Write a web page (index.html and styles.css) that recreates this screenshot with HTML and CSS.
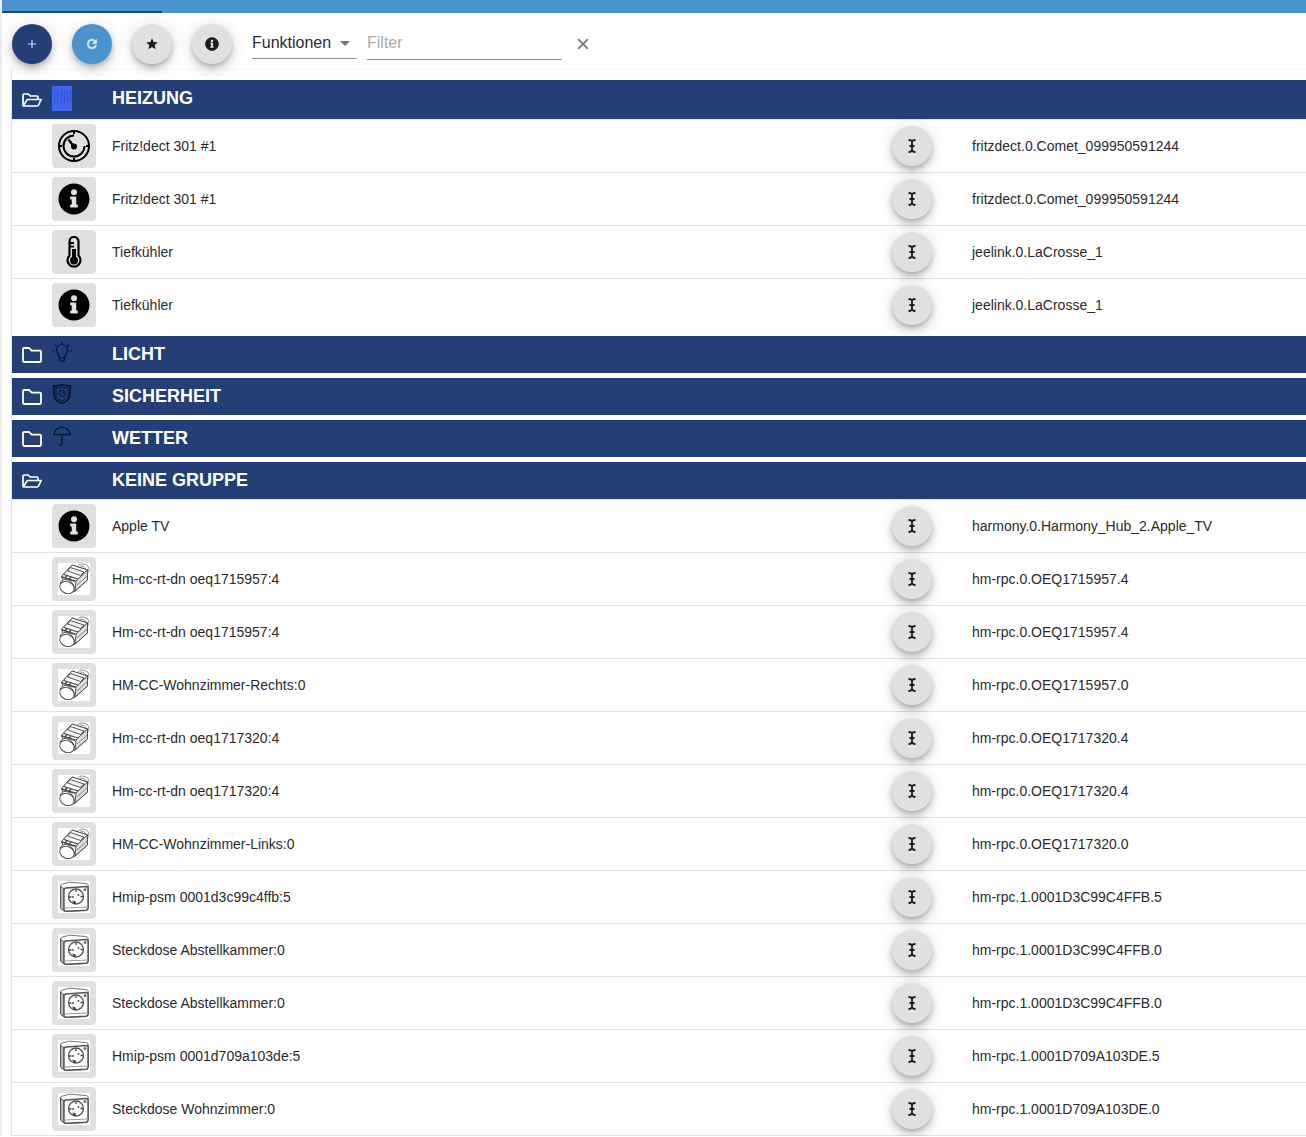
FILE: index.html
```html
<!DOCTYPE html>
<html lang="de">
<head>
    <meta charset="UTF-8">
    <meta name="viewport" content="width=device-width, initial-scale=1.0">
    <title>Geräte</title>
    <link rel="stylesheet" href="styles.css">
</head>
<body>

<svg class="sprite" aria-hidden="true">
    <symbol id="plus" viewBox="0 0 24 24"><path fill="currentColor" d="M19 13h-6v6h-2v-6H5v-2h6V5h2v6h6z"/></symbol>
    <symbol id="refresh" viewBox="0 0 24 24"><path fill="currentColor" stroke="currentColor" stroke-width=".8" d="M17.65 6.35A7.96 7.96 0 0 0 12 4a8 8 0 1 0 7.73 10h-2.08A6 6 0 1 1 12 6c1.66 0 3.14.69 4.22 1.78L13 11h7V4z"/></symbol>
    <symbol id="star" viewBox="0 0 24 24"><path fill="currentColor" d="M12 17.27 18.18 21l-1.64-7.03L22 9.24l-7.19-.61L12 2 9.19 8.63 2 9.24l5.46 4.73L5.82 21z"/></symbol>
    <symbol id="info" viewBox="0 0 512 512"><path fill="currentColor" d="M256 8C119 8 8 119 8 256s111 248 248 248 248-111 248-248S393 8 256 8zm0 92a48 48 0 1 1 0 96 48 48 0 0 1 0-96zm62 280c0 7-5 12-12 12H206c-7 0-12-5-12-12v-26c0-7 5-12 12-12h14v-78h-14c-7 0-12-5-12-12v-26c0-7 5-12 12-12h74c7 0 12 5 12 12v116h14c7 0 12 5 12 12z"/></symbol>
    <symbol id="close" viewBox="0 0 24 24"><path fill="currentColor" stroke="currentColor" stroke-width=".6" d="M19 6.41 17.59 5 12 10.59 6.41 5 5 6.41 10.59 12 5 17.59 6.41 19 12 13.41 17.59 19 19 17.59 13.41 12z"/></symbol>
    <symbol id="arrow" viewBox="0 0 10 5"><path fill="currentColor" d="M0 0h10L5 5z"/></symbol>
    <symbol id="cursor" viewBox="0 0 10 16"><path fill="none" stroke="currentColor" stroke-width="1.8" d="M1.5 2Q5 2 5 4.500v7Q5 14 1.500 14M8.500 2Q5 2 5 4.500M5 11.500Q5 14 8.500 14M2.500 8h5"/></symbol>
    <symbol id="folder" viewBox="0 0 20 16"><path fill="none" stroke="currentColor" stroke-width="1.8" stroke-linejoin="round" d="M1 2.200Q1 1 2.200 1h5l2.400 2.600h8.200Q19 3.600 19 4.800v9Q19 15 17.800 15H2.200Q1 15 1 13.800z"/></symbol>
    <symbol id="folder-open" viewBox="0 0 20 16"><path fill="none" stroke="currentColor" stroke-width="1.7" stroke-linejoin="round" d="M1.400 14 1 13V3.200Q1 2 2.200 2h4l2 2h6.600Q16 4 16 5.200V7.500M1.400 14 4.600 8.300Q5 7.500 6 7.500h13.200L16.500 13q-.5 1-1.500 1z"/></symbol>
    <symbol id="heating" viewBox="0 0 20 25"><path fill="#4263eb" d="M0 0h20v25H0z"/><path fill="none" stroke="#3450cc" d="M2.500 4v13M5.500 4v13M9.500 4v13M12.500 4v13M15.500 4v13M18.500 4v13"/></symbol>
    <symbol id="bulb" viewBox="0 0 20 20"><path fill="none" stroke="currentColor" stroke-width="1.200" d="M7.500 16c0-3-3-4.500-3-8a5.500 5.500 0 0 1 11 0c0 3.500-3 5-3 8zM7.500 18q2.500 3 5 0v-2M7.500 18v-2M10 0v2M3 2.500 4.500 4M17 2.500 15.500 4M0 9h2.500M17.500 9H20"/></symbol>
    <symbol id="shield" viewBox="0 0 20 20"><path fill="none" stroke="currentColor" stroke-width="1.600" d="M10 .8q4 1.200 8.200 1V9q0 7.500-8.200 10.200Q1.800 16.500 1.800 9V1.800Q6 2 10 .8z"/><path fill="none" stroke="currentColor" d="M10 3.200q3 1 6 .9V9q0 5.500-6 7.900Q4 14.500 4 9V4.100q3 .1 6-.9z"/><circle cx="10" cy="9.500" r="3.200" fill="none" stroke="currentColor"/><path fill="none" stroke="currentColor" d="m8.500 9.500 1.200 1.200 2.300-3"/></symbol>
    <symbol id="umbrella" viewBox="0 0 20 20"><path fill="none" stroke="currentColor" stroke-width="1.200" d="M10 0v1.500M2 9C2 4.500 5.500 1.500 10 1.500S18 4.500 18 9q-2-1.500-4 0-2-1.500-4 0-2-1.500-4 0-2-1.500-4 0M10 9v8.500q0 1.800-1.300 1.800T7.500 17.500"/></symbol>
    <symbol id="gauge" viewBox="0 0 32 32"><g fill="none" stroke="#000" stroke-width="2"><circle cx="16" cy="16" r="15"/><path d="M16 5.500A10.500 10.500 0 1 0 26.500 16M16 1v3M16 28v3M1 16h3M28 16h3"/><path stroke-width="2.500" d="m10.500 9.500 5 6.500"/></g><circle cx="16" cy="16.500" r="3"/></symbol>
    <symbol id="thermometer" viewBox="0 0 32 32"><path fill="none" stroke="#000" stroke-width="2.200" d="M11.500 19.500V5.500a4.500 4.500 0 0 1 9 0v14a6.500 6.500 0 1 1-9 0zM12 7h4M12 10.500h4"/><circle cx="16" cy="24.500" r="4"/><path d="M14 13h4v10h-4z"/></symbol>
    <symbol id="thermostat" viewBox="0 0 32 32">
        <path fill="#fff" d="M0 0h32v32H0z"/>
        <g fill="#fff" stroke="#444" stroke-width=".9" stroke-linejoin="round">
            <path stroke="#888" d="M20 3q2-3 7-1.500 4 1 4 4.500 0 3-2 5"/>
            <path stroke="#888" d="M22 3q4-1 7 4"/>
            <path d="M3.500 13.500 14 2l15.500 5v10L16 29l-8-5z"/>
            <path d="M3.500 13.500 14 2l15.500 5L18 18z"/>
            <path fill="#eee" d="m9.500 8 3-3.500L26 9l-3.500 3.500z"/>
            <path fill="#ddd" d="M18 18 29.500 7v10L17 28z"/>
            <path stroke-width="1.300" d="M6 11.500 20 16M3.500 14 17 18.500M9 12.500 7 15M13 14l-2 2.500"/>
            <path fill="none" stroke="#777" d="m19 22 10-9"/>
            <path d="M2 21q1-5 6-4.500 8 1 9 11.500"/>
            <ellipse cx="9" cy="24.500" rx="7.500" ry="5.800" transform="rotate(25 9 24.500)"/>
        </g>
    </symbol>
    <symbol id="socket" viewBox="0 0 32 32">
        <path fill="#fff" d="M0 0h32v32H0z"/>
        <g fill="#fff" stroke="#555" stroke-linejoin="round">
            <path stroke="#777" d="M2.500 5q0-1.500 2-2l7-1.800L28 2.500q2.500.5 2.500 3V26q0 3-2 3.500L7 30.500 2.500 27z"/>
            <path fill="#bbb" d="M2.500 5 6 8v22l-3.500-3z"/>
            <path stroke-width="1.400" d="M6 9.500Q6 7.200 8 7l20.500-1.500q1.500 0 1.500 2V27q0 2-2 2.200L8 30.300q-2 0-2-2z"/>
            <path stroke="#999" d="m6.500 27 23.500-1"/>
            <circle cx="18" cy="15.500" r="7.500" stroke-width="1.300"/>
            <path stroke="#444" stroke-width="1.300" d="M18 8.500v2.500M11 16h2.500M22.500 15.500H25"/>
        </g>
        <path fill="#222" d="m14 19.500 4 1.200-1 2.500z"/>
        <circle cx="15" cy="16" r=".9" fill="#444"/><circle cx="20.500" cy="14" r=".9" fill="#444"/><circle cx="27" cy="8.500" r="1.500" fill="#777"/>
    </symbol>
</svg>

<div class="app">
    <div class="topbar"><div class="tab-indicator"></div></div>

    <div class="toolbar">
        <button class="fab fab-primary" aria-label="Hinzufügen"><svg><use href="#plus"/></svg></button>
        <button class="fab fab-secondary" aria-label="Aktualisieren"><svg><use href="#refresh"/></svg></button>
        <button class="fab" aria-label="Favoriten"><svg><use href="#star"/></svg></button>
        <button class="fab" aria-label="Info"><svg><use href="#info"/></svg></button>
        <div class="select-wrap">
            <select class="select" aria-label="Gruppieren nach">
                <option>Funktionen</option>
            </select>
            <svg class="select-arrow"><use href="#arrow"/></svg>
        </div>
        <input class="filter" type="text" placeholder="Filter" aria-label="Filter">
        <button class="clear" aria-label="Filter löschen"><svg><use href="#close"/></svg></button>
    </div>

    <main class="panel" id="panel"></main>
</div>

<script>
    const groups = [
        { name: 'HEIZUNG', icon: 'heating', devices: [
            ['gauge', 'Fritz!dect 301 #1', 'fritzdect.0.Comet_099950591244'],
            ['info', 'Fritz!dect 301 #1', 'fritzdect.0.Comet_099950591244'],
            ['thermometer', 'Tiefkühler', 'jeelink.0.LaCrosse_1'],
            ['info', 'Tiefkühler', 'jeelink.0.LaCrosse_1']
        ] },
        { name: 'LICHT', icon: 'bulb' },
        { name: 'SICHERHEIT', icon: 'shield' },
        { name: 'WETTER', icon: 'umbrella' },
        { name: 'KEINE GRUPPE', devices: [
            ['info', 'Apple TV', 'harmony.0.Harmony_Hub_2.Apple_TV'],
            ['thermostat', 'Hm-cc-rt-dn oeq1715957:4', 'hm-rpc.0.OEQ1715957.4'],
            ['thermostat', 'Hm-cc-rt-dn oeq1715957:4', 'hm-rpc.0.OEQ1715957.4'],
            ['thermostat', 'HM-CC-Wohnzimmer-Rechts:0', 'hm-rpc.0.OEQ1715957.0'],
            ['thermostat', 'Hm-cc-rt-dn oeq1717320:4', 'hm-rpc.0.OEQ1717320.4'],
            ['thermostat', 'Hm-cc-rt-dn oeq1717320:4', 'hm-rpc.0.OEQ1717320.4'],
            ['thermostat', 'HM-CC-Wohnzimmer-Links:0', 'hm-rpc.0.OEQ1717320.0'],
            ['socket', 'Hmip-psm 0001d3c99c4ffb:5', 'hm-rpc.1.0001D3C99C4FFB.5'],
            ['socket', 'Steckdose Abstellkammer:0', 'hm-rpc.1.0001D3C99C4FFB.0'],
            ['socket', 'Steckdose Abstellkammer:0', 'hm-rpc.1.0001D3C99C4FFB.0'],
            ['socket', 'Hmip-psm 0001d709a103de:5', 'hm-rpc.1.0001D709A103DE.5'],
            ['socket', 'Steckdose Wohnzimmer:0', 'hm-rpc.1.0001D709A103DE.0']
        ] }
    ];

    const row = ([icon, name, id]) => `
        <tr>
            <td class="col-space"></td>
            <td class="col-icon"><span class="device-icon"><svg><use href="#${icon}"/></svg></span></td>
            <td>${name}</td>
            <td class="col-action"><button class="fab" aria-label="${name} umbenennen"><svg class="cursor"><use href="#cursor"/></svg></button></td>
            <td class="col-id">${id}</td>
        </tr>`;

    document.getElementById('panel').innerHTML = groups.map(group => `
        <section class="group">
            <div class="group-header">
                <button class="toggle" aria-label="${group.name} auf- oder zuklappen"><svg><use href="#${group.devices ? 'folder-open' : 'folder'}"/></svg></button>
                <span class="group-icon">${group.icon ? `<svg class="${group.icon}"><use href="#${group.icon}"/></svg>` : ''}</span>
                <h2 class="group-title">${group.name}</h2>
            </div>
            ${group.devices ? `<table class="devices"><tbody>${group.devices.map(row).join('')}</tbody></table>` : ''}
        </section>`).join('');
</script>

</body>
</html>
```
FILE: styles.css
```css
* {
    box-sizing: border-box;
}

body {
    margin: 0;
    background: #fff;
    color: #2b2b2b;
    font-family: "Liberation Sans", Arial, sans-serif;
    font-size: 14px;
}

button {
    padding: 0;
    border: 0;
    background: none;
    color: inherit;
    cursor: pointer;
}

svg {
    display: block;
}

.sprite {
    display: none;
}

.app {
    border-left: 2px solid #eee;
}

.topbar {
    display: flex;
    align-items: flex-end;
    height: 13px;
    background: #4a93cc;
}

.tab-indicator {
    width: 160px;
    height: 2px;
    background: #1d4578;
}

/* Toolbar */
.toolbar {
    display: flex;
    align-items: center;
    gap: 20px;
    padding: 11px 10px 5px;
}

.fab {
    display: flex;
    flex: none;
    align-items: center;
    justify-content: center;
    width: 40px;
    height: 40px;
    border-radius: 50%;
    background: #e0e0e0;
    color: #1c1c1c;
    box-shadow: 0 3px 5px -1px rgba(0, 0, 0, 0.2), 0 6px 10px rgba(0, 0, 0, 0.14), 0 1px 18px rgba(0, 0, 0, 0.12);
}

.fab svg {
    width: 14px;
    height: 14px;
}

.fab .cursor {
    width: 10px;
    height: 16px;
}

.fab-primary {
    background: #243f76;
    color: #cfd8ea;
}

.fab-secondary {
    background: #4a93cc;
    color: #e6f4ff;
}

.select-wrap {
    position: relative;
    width: 105px;
}

.select {
    width: 100%;
    height: 30px;
    padding: 0 24px 3px 0;
    border: 0;
    border-bottom: 1px solid #949494;
    background: none;
    color: #2b2b2b;
    font: inherit;
    font-size: 16px;
    appearance: none;
}

.select-arrow {
    position: absolute;
    top: 12px;
    right: 7px;
    width: 10px;
    height: 5px;
    color: #757575;
    pointer-events: none;
}

.filter {
    width: 195px;
    height: 32px;
    margin-left: -10px;
    padding: 0 0 2px;
    border: 0;
    border-bottom: 1px solid #949494;
    background: none;
    font: inherit;
    font-size: 16px;
}

.filter::placeholder {
    color: #aaa;
    opacity: 1;
}

.clear {
    margin-left: -8px;
    color: #757575;
}

.clear svg {
    width: 18px;
    height: 18px;
}

/* Device list */
.panel {
    margin-left: 9px;
    padding-top: 10px;
    border-top: 1px solid #f6f6f6;
    border-left: 1px solid #e4e4e4;
}

.group {
    margin-bottom: 5px;
}

.group:last-child {
    margin-bottom: 0;
}

.group-header {
    display: grid;
    grid-template-columns: 40px 60px 1fr;
    padding: 6px 0;
    background: #243f76;
    color: #fff;
}

.toggle {
    align-self: center;
    justify-self: start;
    margin-left: 10px;
}

.toggle svg {
    width: 20px;
    height: 16px;
}

.group-icon svg {
    width: 20px;
    height: 20px;
    color: #06122e;
}

.group-icon .heating {
    height: 25px;
    margin-bottom: 2px;
}

.group-title {
    margin: 0;
    font-size: 18px;
    line-height: 25px;
}

.devices {
    width: 100%;
    border-top: 1px solid #e4e8f0;
    border-spacing: 0;
    table-layout: fixed;
}

.devices td {
    height: 53px;
    padding: 0;
    border-bottom: 1px solid #e0e0e0;
}

.group:not(:last-child) tr:last-child td {
    height: 52px;
    border-bottom: 0;
}

.devices .col-space {
    width: 40px;
}

.devices .col-icon {
    width: 60px;
}

.devices .col-action {
    width: 80px;
}

.devices .col-id {
    width: 334px;
}

.device-icon {
    display: flex;
    align-items: center;
    justify-content: center;
    width: 44px;
    height: 44px;
    border-radius: 4px;
    background: #e0e0e0;
    color: #000;
}

.device-icon svg {
    width: 32px;
    height: 32px;
}
```
